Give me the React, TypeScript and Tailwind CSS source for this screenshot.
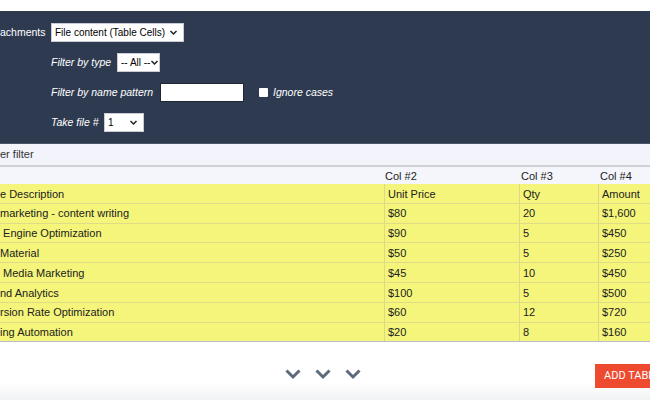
import React from 'react';

const ROWS = [
  ['e Description', 'Unit Price', 'Qty', 'Amount'],
  ['marketing - content writing', '$80', '20', '$1,600'],
  [' Engine Optimization', '$90', '5', '$450'],
  ['Material', '$50', '5', '$250'],
  [' Media Marketing', '$45', '10', '$450'],
  ['nd Analytics', '$100', '5', '$500'],
  ['rsion Rate Optimization', '$60', '12', '$720'],
  ['ing Automation', '$20', '8', '$160'],
];

function Chevron() {
  return (
    <svg width="9" height="7" viewBox="0 0 9 7" className="shrink-0">
      <path d="M1.5 2 L4.5 5 L7.5 2" fill="none" stroke="#222" strokeWidth="1.5" />
    </svg>
  );
}

function FakeSelect({ value, width }: { value: string; width: string }) {
  return (
    <div className={`${width} h-[19px] bg-white border border-[#c9ccd3] flex items-center justify-between pl-[3px] pr-[5px] text-[10px] text-black`}>
      <span className="whitespace-nowrap">{value}</span>
      <Chevron />
    </div>
  );
}

function DownArrow() {
  return (
    <svg width="16" height="12" viewBox="0 0 16 12">
      <path d="M1.5 2.5 L8 9 L14.5 2.5" fill="none" stroke="#5b6b7c" strokeWidth="3" />
    </svg>
  );
}

export default function App() {
  return (
    <div className="w-[650px] h-[400px] overflow-hidden bg-white flex flex-col font-['Liberation_Sans',Arial,sans-serif]">
      <div className="h-[11px] shrink-0" />

      {/* Settings panel */}
      <div className="h-[133px] shrink-0 bg-[#2e3a50] border-b border-[#4a5568] pt-[12px] flex flex-col gap-[11px] text-[10.5px] text-white">
        <div className="flex items-center h-[19px]">
          <span className="w-[51px] whitespace-nowrap">achments</span>
          <FakeSelect value="File content (Table Cells)" width="w-[133px]" />
        </div>
        <div className="flex items-center h-[19px] pl-[51px]">
          <span className="italic w-[66px]">Filter by type</span>
          <FakeSelect value="-- All --" width="w-[43px]" />
        </div>
        <div className="flex items-center h-[19px] pl-[51px]">
          <span className="italic w-[109px]">Filter by name pattern</span>
          <div className="w-[84px] h-[19px] bg-white border border-[#1f2735]" />
          <div className="ml-[15px] w-[9px] h-[9px] bg-white rounded-[1px]" />
          <span className="italic ml-[5px]">Ignore cases</span>
        </div>
        <div className="flex items-center h-[19px] pl-[51px]">
          <span className="italic w-[53px]">Take file #</span>
          <FakeSelect value="1" width="w-[40px]" />
        </div>
      </div>

      {/* Filter bar */}
      <div className="h-[23px] shrink-0 bg-[#f3f4fb] border-b-2 border-[#cfd0d6] flex items-center text-[11px] text-[#333]">
        er filter
      </div>

      {/* Table */}
      <div className="h-[175px] shrink-0 overflow-hidden border-b border-[#b9bdc8] text-[11px] text-[#222]">
        <div className="grid grid-cols-[384px_135px_79px_1fr] h-[17px] bg-[#f5f6fc] items-center pt-[1px]">
          <div />
          <div className="pl-[1px]">Col #2</div>
          <div className="pl-[2px]">Col #3</div>
          <div className="pl-[2px]">Col #4</div>
        </div>
        {ROWS.map((r, i) => (
          <div
            key={i}
            className="grid grid-cols-[384px_135px_79px_1fr] h-[19.8px] bg-[#f4f57a] border-b border-[#dfdb86]"
          >
            <div className="flex items-center whitespace-pre pt-[1px]">{r[0]}</div>
            <div className="flex items-center border-l border-[#dcd888] pl-[3px] pt-[1px]">{r[1]}</div>
            <div className="flex items-center border-l border-[#dcd888] pl-[3px] pt-[1px]">{r[2]}</div>
            <div className="flex items-center border-l border-[#dcd888] pl-[3px] pt-[1px]">{r[3]}</div>
          </div>
        ))}
      </div>

      {/* Footer */}
      <div className="flex-1 bg-gradient-to-b from-white from-70% to-[#f1f2f3] flex items-start pt-[26px] pl-[285px]">
        <div className="flex gap-[14px]">
          <DownArrow />
          <DownArrow />
          <DownArrow />
        </div>
        <div className="ml-auto mt-[-4px] h-[24px] w-[70px] -mr-[15px] bg-[#ee4a2f] text-white text-[11px] font-['Roboto',sans-serif] flex items-center pl-[9px] whitespace-nowrap">
          ADD TABLE
        </div>
      </div>
    </div>
  );
}
